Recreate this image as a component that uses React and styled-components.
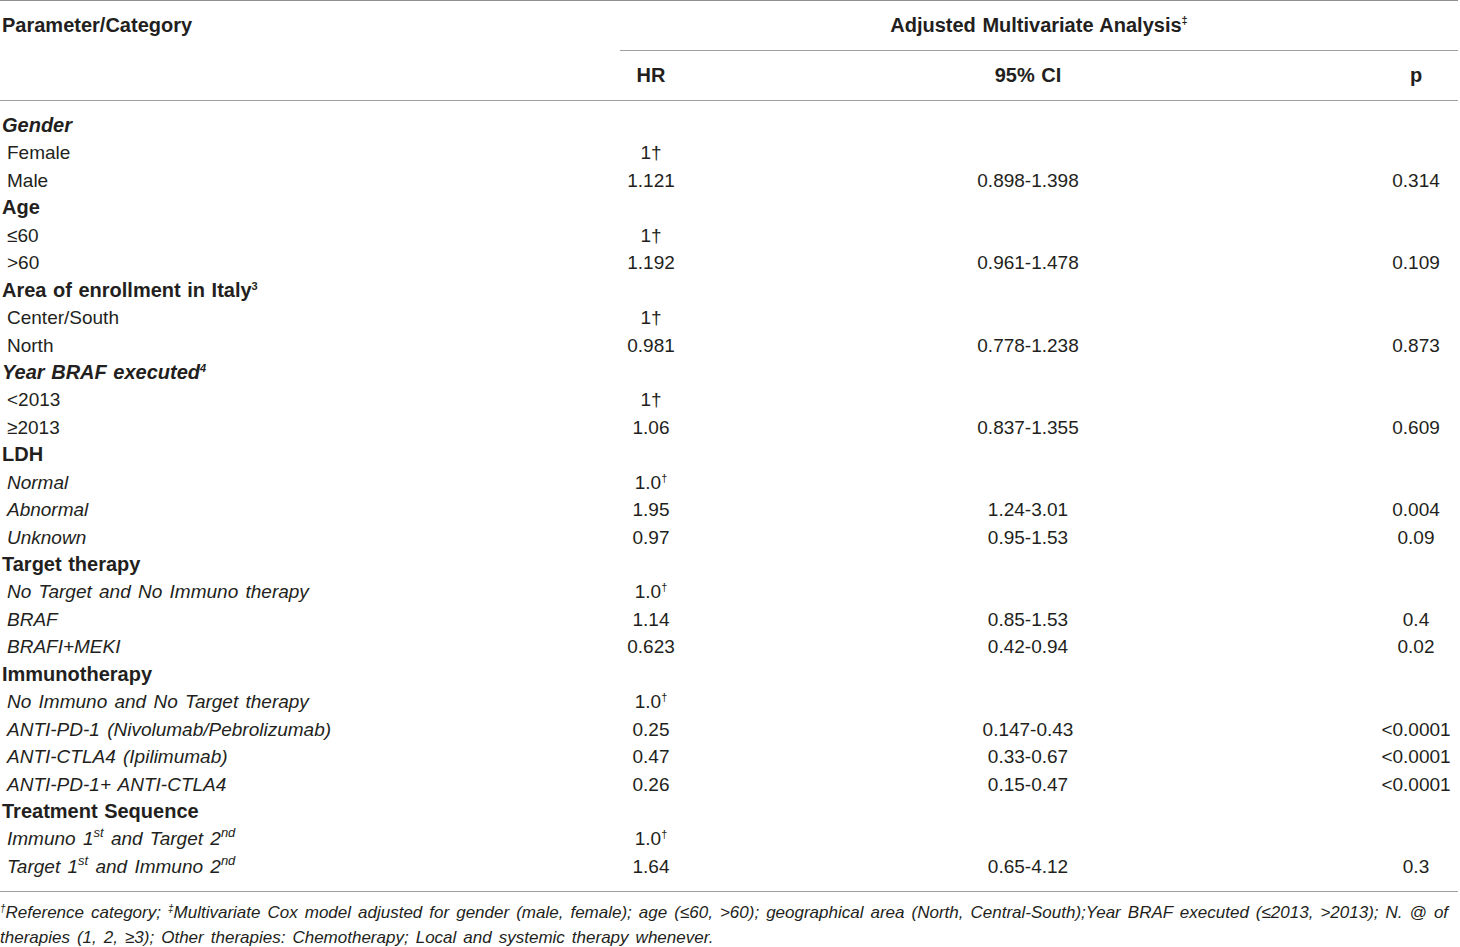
import React from 'react';
import styled, { createGlobalStyle } from 'styled-components';

const GlobalStyle = createGlobalStyle`
  html, body {
    margin: 0;
    padding: 0;
    background: #ffffff;
  }
  body {
    font-family: "Liberation Sans", Arial, Helvetica, sans-serif;
    color: #231f20;
  }
`;

const Wrapper = styled.div`
  width: 1458px;
`;

const Table = styled.table`
  width: 100%;
  border-collapse: collapse;
  border-spacing: 0;
  table-layout: fixed;
  border-top: 1px solid #8f8f8f;
  border-bottom: 1px solid #a0a0a0;
  font-size: 19px;
  word-spacing: 2px;
`;

const HeadCell = styled.th`
  height: 49px;
  padding: 0;
  font-size: 20px;
  font-weight: 700;
  word-spacing: 1px;
  text-align: ${(p) => p.$align || 'center'};
  padding-left: ${(p) => (p.$align === 'left' ? '2px' : '0')};
  vertical-align: middle;
  border-bottom: ${(p) => (p.$rule ? '1px solid #a0a0a0' : 'none')};

  sup {
    font-size: 11px;
    line-height: 0;
    vertical-align: 8px;
  }
`;

const Row = styled.tr`
  &:first-child td {
    padding-top: 11px;
  }
  &:last-child td {
    padding-bottom: 11px;
  }
`;

const Cell = styled.td`
  height: 27.44px;
  line-height: 27.44px;
  padding: 0;
  white-space: nowrap;
  text-align: center;
  vertical-align: middle;

  sup {
    font-size: 11px;
    line-height: 0;
    vertical-align: 7px;
  }
`;

const LabelCell = styled(Cell)`
  text-align: left;
  padding-left: ${(p) => (p.$group ? '2px' : '7px')};
  font-size: ${(p) => (p.$group ? '20px' : '19px')};
  font-weight: ${(p) => (p.$group ? 700 : 400)};
  font-style: ${(p) => (p.$italic ? 'italic' : 'normal')};
  word-spacing: ${(p) => (p.$group ? '1px' : '2px')};
`;

const Ordinal = styled.sup`
  && {
    font-size: 13px;
    vertical-align: 8px;
    word-spacing: 0;
  }
`;

const Footnote = styled.p`
  margin: 0;
  padding-top: 8px;
  font-size: 17px;
  line-height: 25px;
  font-style: italic;
  word-spacing: 2.3px;

  sup {
    font-size: 10px;
    line-height: 0;
    vertical-align: 6px;
  }
`;

const Ref = () => (
  <>
    1.0<sup>†</sup>
  </>
);

const rows = [
  { label: 'Gender', group: true, italic: true },
  { label: 'Female', hr: '1†' },
  { label: 'Male', hr: '1.121', ci: '0.898-1.398', p: '0.314' },
  { label: 'Age', group: true },
  { label: '≤60', hr: '1†' },
  { label: '>60', hr: '1.192', ci: '0.961-1.478', p: '0.109' },
  { label: <>Area of enrollment in Italy<sup>3</sup></>, group: true },
  { label: 'Center/South', hr: '1†' },
  { label: 'North', hr: '0.981', ci: '0.778-1.238', p: '0.873' },
  { label: <>Year BRAF executed<sup>4</sup></>, group: true, italic: true },
  { label: '<2013', hr: '1†' },
  { label: '≥2013', hr: '1.06', ci: '0.837-1.355', p: '0.609' },
  { label: 'LDH', group: true },
  { label: 'Normal', italic: true, hr: <Ref /> },
  { label: 'Abnormal', italic: true, hr: '1.95', ci: '1.24-3.01', p: '0.004' },
  { label: 'Unknown', italic: true, hr: '0.97', ci: '0.95-1.53', p: '0.09' },
  { label: 'Target therapy', group: true },
  { label: 'No Target and No Immuno therapy', italic: true, hr: <Ref /> },
  { label: 'BRAF', italic: true, hr: '1.14', ci: '0.85-1.53', p: '0.4' },
  { label: 'BRAFI+MEKI', italic: true, hr: '0.623', ci: '0.42-0.94', p: '0.02' },
  { label: 'Immunotherapy', group: true },
  { label: 'No Immuno and No Target therapy', italic: true, hr: <Ref /> },
  { label: 'ANTI-PD-1 (Nivolumab/Pebrolizumab)', italic: true, hr: '0.25', ci: '0.147-0.43', p: '<0.0001' },
  { label: 'ANTI-CTLA4 (Ipilimumab)', italic: true, hr: '0.47', ci: '0.33-0.67', p: '<0.0001' },
  { label: 'ANTI-PD-1+ ANTI-CTLA4', italic: true, hr: '0.26', ci: '0.15-0.47', p: '<0.0001' },
  { label: 'Treatment Sequence', group: true },
  {
    label: <>Immuno 1<Ordinal>st</Ordinal> and Target 2<Ordinal>nd</Ordinal></>,
    italic: true,
    hr: <Ref />,
  },
  {
    label: <>Target 1<Ordinal>st</Ordinal> and Immuno 2<Ordinal>nd</Ordinal></>,
    italic: true,
    hr: '1.64',
    ci: '0.65-4.12',
    p: '0.3',
  },
];

const App = () => {
  return (
    <Wrapper>
      <GlobalStyle />
      <Table>
        <colgroup>
          <col style={{ width: 620 }} />
          <col style={{ width: 62 }} />
          <col style={{ width: 692 }} />
          <col />
        </colgroup>
        <thead>
          <tr>
            <HeadCell $align="left">Parameter/Category</HeadCell>
            <HeadCell colSpan={3} $rule>
              Adjusted Multivariate Analysis<sup>‡</sup>
            </HeadCell>
          </tr>
          <tr>
            <HeadCell $rule />
            <HeadCell $rule>HR</HeadCell>
            <HeadCell $rule>95% CI</HeadCell>
            <HeadCell $rule>p</HeadCell>
          </tr>
        </thead>
        <tbody>
          {rows.map((r, i) => (
            <Row key={i}>
              <LabelCell $group={r.group} $italic={r.italic}>
                {r.label}
              </LabelCell>
              <Cell>{r.hr}</Cell>
              <Cell>{r.ci}</Cell>
              <Cell>{r.p}</Cell>
            </Row>
          ))}
        </tbody>
      </Table>
      <Footnote>
        <sup>†</sup>Reference category; <sup>‡</sup>Multivariate Cox model adjusted for gender (male,
        female); age (≤60, &gt;60); geographical area (North, Central-South);Year BRAF executed (≤2013,
        &gt;2013); N. @ of therapies (1, 2, ≥3); Other therapies: Chemotherapy; Local and systemic
        therapy whenever.
      </Footnote>
    </Wrapper>
  );
};

export default App;
